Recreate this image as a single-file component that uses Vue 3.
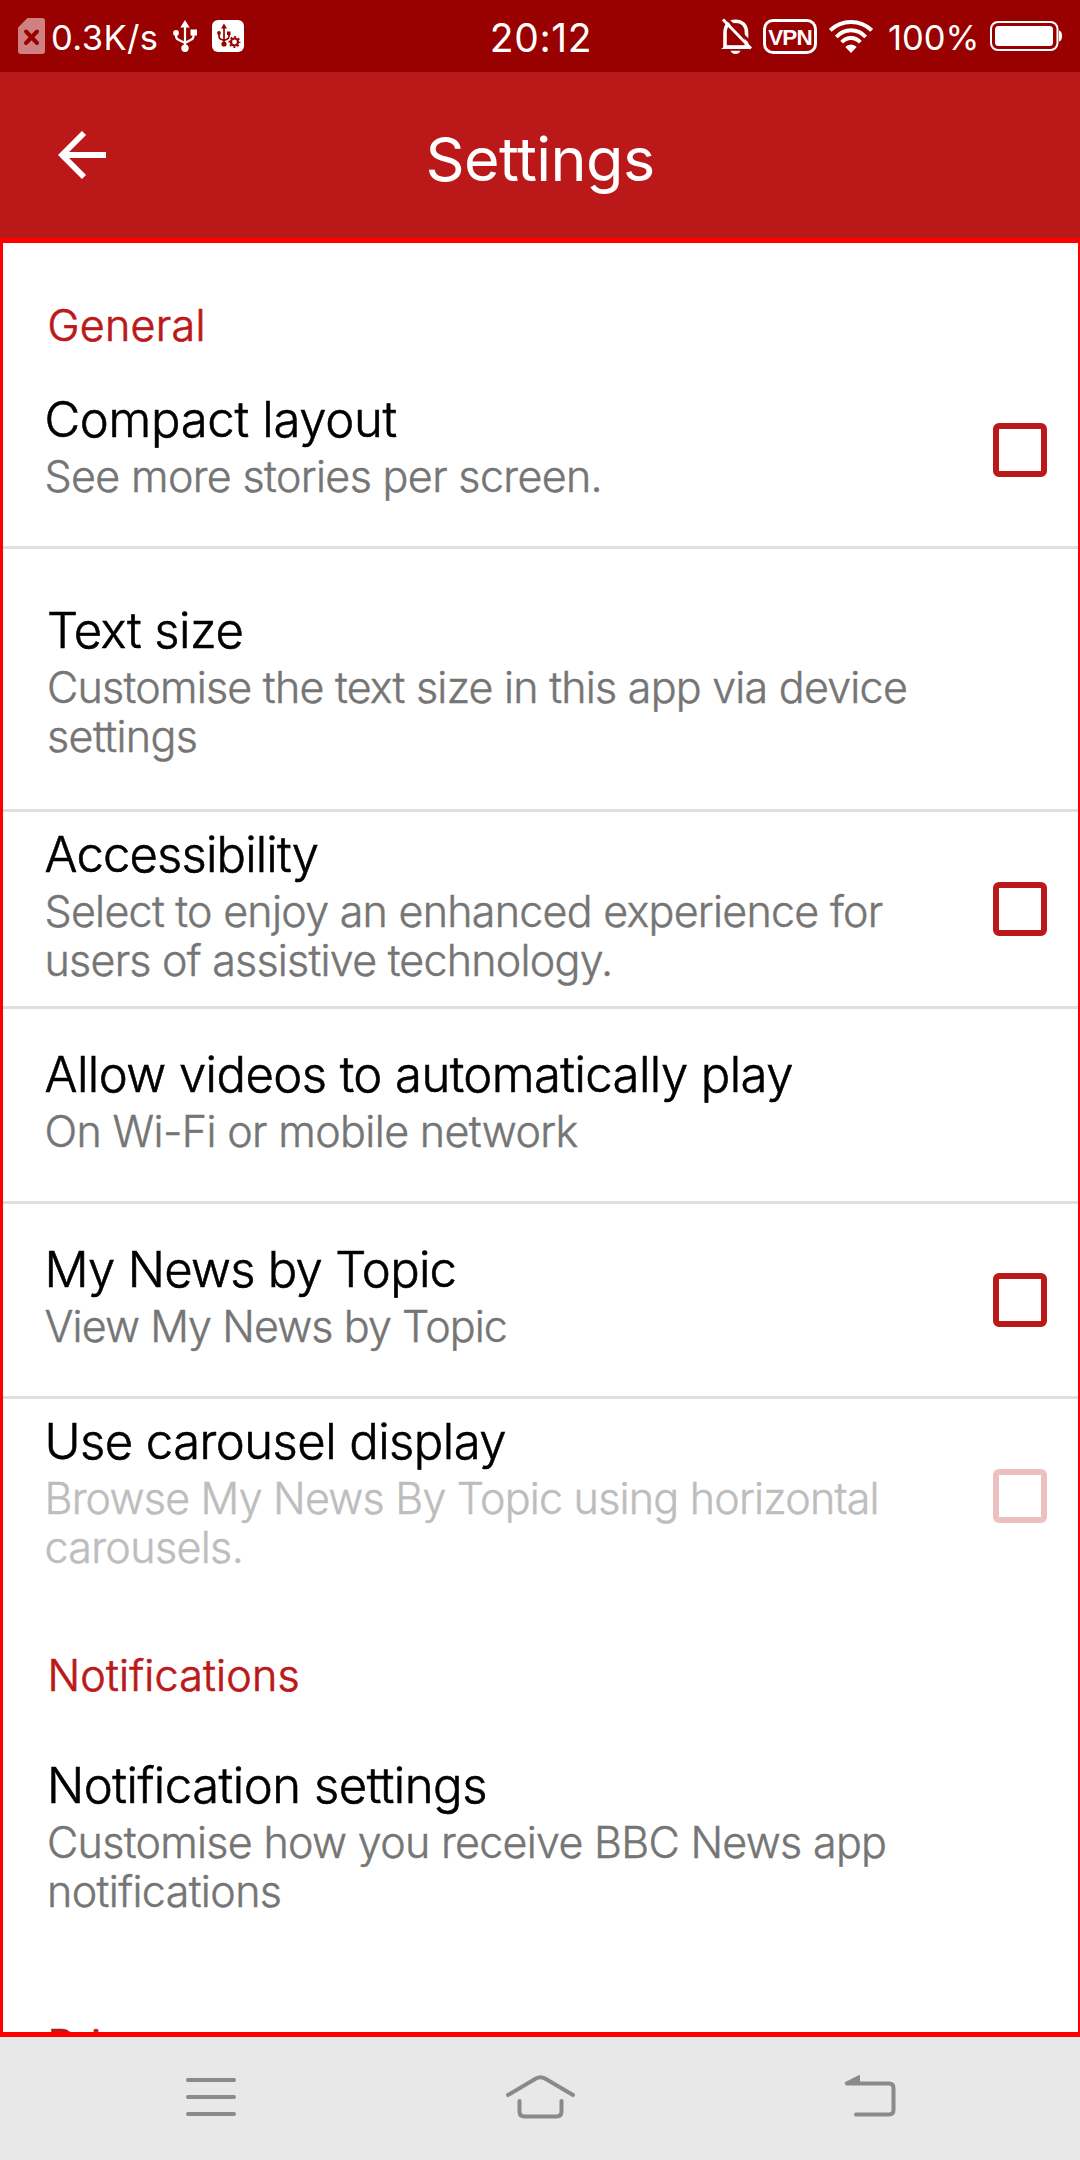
<script setup>
const sections = [
  {
    heading: 'General',
    tracking: 0.3,
    items: [
      { size: 'medium', title: 'Compact layout', titleTracking: -0.3, lines: [['See more stories per screen.', -0.65]], toggle: true, divider: true },
      { size: 'tall', title: 'Text size', titleTracking: -0.5, lines: [['Customise the text size in this app via device', -0.77], ['settings', -0.6]], divider: true },
      { size: 'dense', title: 'Accessibility', titleTracking: -0.85, lines: [['Select to enjoy an enhanced experience for', -0.74], ['users of assistive technology.', -0.77]], toggle: true, divider: true },
      { size: 'medium', title: 'Allow videos to automatically play', titleTracking: -0.56, lines: [['On Wi-Fi or mobile network', -0.64]], divider: true },
      { size: 'medium', title: 'My News by Topic', titleTracking: -0.72, lines: [['View My News by Topic', -0.92]], toggle: true, divider: true },
      { size: 'dense', title: 'Use carousel display', titleTracking: -0.55, lines: [['Browse My News By Topic using horizontal', -0.79], ['carousels.', -0.65]], toggle: true, disabled: true },
    ],
  },
  {
    heading: 'Notifications',
    tracking: 0.2,
    items: [
      { size: 'tall', title: 'Notification settings', titleTracking: -0.48, lines: [['Customise how you receive BBC News app', -0.71], ['notifications', -0.62]] },
    ],
  },
  { heading: 'Privacy', tracking: 0.3, items: [] },
]
</script>

<template>
  <div class="screen">
    <div class="status">
      <div class="status-left">
        <svg class="sim" width="27" height="36" viewBox="0 0 27 36">
          <path d="M9.500 0H24a3 3 0 0 1 3 3v30a3 3 0 0 1-3 3H3a3 3 0 0 1-3-3V9.500z" fill="#cf8080" />
          <path d="M8 13.500l11 11.500M19 13.500L8 25" stroke="#990000" stroke-width="4" stroke-linecap="round" />
        </svg>
        <span class="speed">0.3K/s</span>
        <svg class="usb" width="24" height="32" viewBox="0 0 24 32">
          <g fill="none" stroke="#fff" stroke-width="2.200">
            <path d="M12 5v23M3 12.500v3.500q0 3 3 4l6 3M20.500 12v4q0 3-3 4L12 23" />
          </g>
          <path d="M12 0l4.700 7.500H7.300zM17.500 9.500H24v6h-6.500z" fill="#fff" />
          <circle cx="3" cy="13" r="2.900" fill="#fff" />
          <circle cx="12" cy="28.300" r="3.700" fill="#fff" />
        </svg>
        <svg class="usb-box" width="32" height="32" viewBox="0 0 32 32">
          <rect width="32" height="32" rx="6" fill="#fff" />
          <g fill="none" stroke="#990000" stroke-width="1.700">
            <path d="M12 6v18M7 13v3.500q0 2 2 2.700l3 1.300M17 13v3.500q0 2-2 2.700l-3 1.300" />
          </g>
          <path d="M12 3.500l3 5H9zM15 11.500h3.500v3.500H15z" fill="#990000" />
          <circle cx="7" cy="13" r="1.900" fill="#990000" />
          <circle cx="12" cy="24" r="2.600" fill="#990000" />
          <circle cx="22.500" cy="22" r="6.500" fill="#fff" />
          <circle cx="22.500" cy="22" r="3.500" fill="none" stroke="#990000" stroke-width="2.200" />
          <circle cx="22.500" cy="22" r="5.100" fill="none" stroke="#990000" stroke-width="1.700" stroke-dasharray="2 2.005" stroke-dashoffset="1" />
        </svg>
      </div>
      <span class="clock">20:12</span>
      <div class="status-right">
        <svg width="31" height="36" viewBox="0 0 31 36">
          <path d="M4 30V15C4 7 8 3.300 14.500 3.300S25.500 7 25.500 15v14" fill="none" stroke="#fff" stroke-width="3.600" />
          <path d="M0 31q3-1.300 4-4h21l5 4z" fill="#fff" />
          <path d="M6 24h17v3.200H6z" fill="#990000" />
          <path d="M9.500 32.700h10q-1.500 3.300-5 3.300t-5-3.300z" fill="#fff" />
          <path d="M4.500-.5L32 27" stroke="#990000" stroke-width="3" />
          <path d="M2 1.500L30 30.500" stroke="#fff" stroke-width="3" />
        </svg>
        <span class="vpn">VPN</span>
        <svg class="wifi" width="44" height="33" viewBox="0 0 44 33">
          <g fill="none" stroke="#fff" stroke-width="3.900">
            <path d="M1.300 10.300Q10 2 22 2t20.700 8.300" />
            <path d="M7.300 17Q13.500 10.300 22 10.300T36.700 17" />
            <path d="M12.700 22.300Q16.500 18 22 18t9.300 4.300" />
          </g>
          <path d="M16.300 27q2.200-2.500 5.700-2.500t5.700 2.500L22 33z" fill="#fff" />
        </svg>
        <span class="percent">100%</span>
        <svg width="72" height="30" viewBox="0 0 72 30">
          <rect x="1" y="1" width="66.500" height="28" rx="7" fill="none" stroke="#fff" stroke-width="2" />
          <rect x="5" y="5" width="58" height="20" rx="3.500" fill="#fff" />
          <path d="M69 9.500q3 .5 3 5.500t-3 5.500z" fill="#fff" />
        </svg>
      </div>
    </div>

    <header class="bar">
      <svg class="back" width="50" height="50" viewBox="0 0 50 50">
        <path d="M26 3L4 25l22 22M4 25h44" fill="none" stroke="#fff" stroke-width="5.800" />
      </svg>
      <h1>Settings</h1>
    </header>

    <main class="panel">
      <section v-for="section in sections" :key="section.heading">
        <h2 :style="{ letterSpacing: section.tracking + 'px' }">{{ section.heading }}</h2>
        <div
          v-for="item in section.items"
          :key="item.title"
          class="row"
          :class="[item.size, { divider: item.divider, disabled: item.disabled }]"
        >
          <div class="copy">
            <div class="title" :style="{ letterSpacing: item.titleTracking + 'px' }">{{ item.title }}</div>
            <div class="summary">
              <div v-for="[text, tracking] in item.lines" :key="text" :style="{ letterSpacing: tracking + 'px' }">{{ text }}</div>
            </div>
          </div>
          <span v-if="item.toggle" class="checkbox"></span>
        </div>
      </section>
    </main>

    <nav class="nav">
      <svg width="50" height="44" viewBox="0 0 50 44">
        <path d="M2 5h46M2 22h46M2 39h46" />
      </svg>
      <svg width="70" height="44" viewBox="0 0 70 44">
        <path d="M3 20L31 3.500q4.500-2.500 9 0L68 20M14.500 26v10.500q0 5 5 5h32q5 0 5-5V26" />
      </svg>
      <svg width="52" height="44" viewBox="0 0 52 44">
        <path d="M3 8.500h42q4.500 0 4.500 4.500v22q0 4.500-4.500 4.500H12" />
        <path class="tip" d="M1.500 7.500L15.500.3V9H2z" />
      </svg>
    </nav>
  </div>
</template>

<style>
body {
  margin: 0;
}
</style>

<style scoped>
.screen {
  width: 1080px;
  height: 2160px;
  overflow: hidden;
  display: flex;
  flex-direction: column;
  background: #fff;
  font-family: Inter, Roboto, sans-serif;
  font-weight: 300;
}
.screen svg {
  flex: none;
  display: block;
}
.status {
  height: 72px;
  flex: none;
  box-sizing: border-box;
  padding: 0 18px;
  display: grid;
  grid-template-columns: 1fr auto 1fr;
  align-items: center;
  background: #990000;
  color: #fff;
  font-size: 34.500px;
  font-weight: 400;
  white-space: nowrap;
}
.status-left,
.status-right {
  display: flex;
  align-items: center;
}
.status-right {
  justify-content: flex-end;
}
.speed {
  width: 123px;
  margin-left: 6px;
  padding-top: 2px;
  letter-spacing: 0.4px;
}
.usb {
  margin-left: -1px;
}
.usb-box {
  margin-left: 15px;
}
.clock {
  font-size: 39px;
  letter-spacing: 0.6px;
  padding: 3px 0 0 2px;
}
.vpn {
  box-sizing: border-box;
  width: 54px;
  height: 35px;
  margin-left: 11px;
  border: 3px solid #fff;
  border-radius: 10px;
  font: bold 22.500px/31px "Liberation Sans", sans-serif;
  letter-spacing: -0.9px;
  display: flex;
  justify-content: center;
}
.wifi {
  margin-left: 12px;
}
.percent {
  width: 102px;
  margin-left: 15px;
  padding-top: 2px;
}
.bar {
  height: 166px;
  flex: none;
  box-sizing: border-box;
  padding: 0 58px;
  display: grid;
  grid-template-columns: 1fr auto 1fr;
  align-items: center;
  background: #bb1919;
  color: #fff;
}
h1 {
  margin: 0;
  padding-top: 8px;
  font-size: 61px;
  font-weight: 400;
  line-height: 70px;
  letter-spacing: -0.55px;
}
.panel {
  height: 1799px;
  flex: none;
  box-sizing: border-box;
  overflow: hidden;
  border: solid #f00;
  border-width: 5px 2px 5px 3px;
}
h2 {
  margin: 0;
  height: 111px;
  box-sizing: border-box;
  padding: 57px 0 0 44.500px;
  color: #bb1919;
  font-size: 43px;
  line-height: 50px;
  font-weight: 300;
  -webkit-text-stroke: 0.7px currentColor;
}
.row {
  box-sizing: border-box;
  padding: 0 31px 0 41.500px;
  display: flex;
  justify-content: space-between;
  align-items: center;
  white-space: nowrap;
}
.divider {
  border-bottom: 3px solid #dfdfdf;
}
.copy {
  align-self: flex-start;
}
.medium {
  height: 195px;
}
.medium .copy {
  padding-top: 36px;
}
.tall {
  height: 259px;
  padding-left: 44px;
}
.tall .copy {
  padding-top: 52px;
}
.tall.divider {
  height: 263px;
}
.dense {
  height: 194px;
}
.dense.divider {
  height: 197px;
}
.dense .copy {
  padding-top: 13px;
}
.title {
  color: #000;
  font-size: 49px;
  line-height: 60px;
  -webkit-text-stroke: 0.6px currentColor;
}
.summary {
  margin-top: 2px;
  color: #757575;
  font-size: 43px;
  line-height: 49px;
  -webkit-text-stroke: 0.45px currentColor;
}
.checkbox {
  box-sizing: border-box;
  width: 54px;
  height: 54px;
  flex: none;
  border: 6px solid #bb1919;
  border-radius: 6px;
}
.disabled .summary {
  color: #bdbdbd;
}
.disabled .checkbox {
  border-color: #edc0c0;
}
.nav {
  flex: 1;
  box-sizing: border-box;
  padding: 38px 184px 0 186px;
  display: flex;
  justify-content: space-between;
  align-items: flex-start;
  background: #e8e8e8;
}
.nav path {
  fill: none;
  stroke: #8a8a8a;
  stroke-width: 4;
  stroke-linecap: round;
  stroke-linejoin: round;
}
.nav .tip {
  fill: #8a8a8a;
  stroke-width: 1;
}
</style>
